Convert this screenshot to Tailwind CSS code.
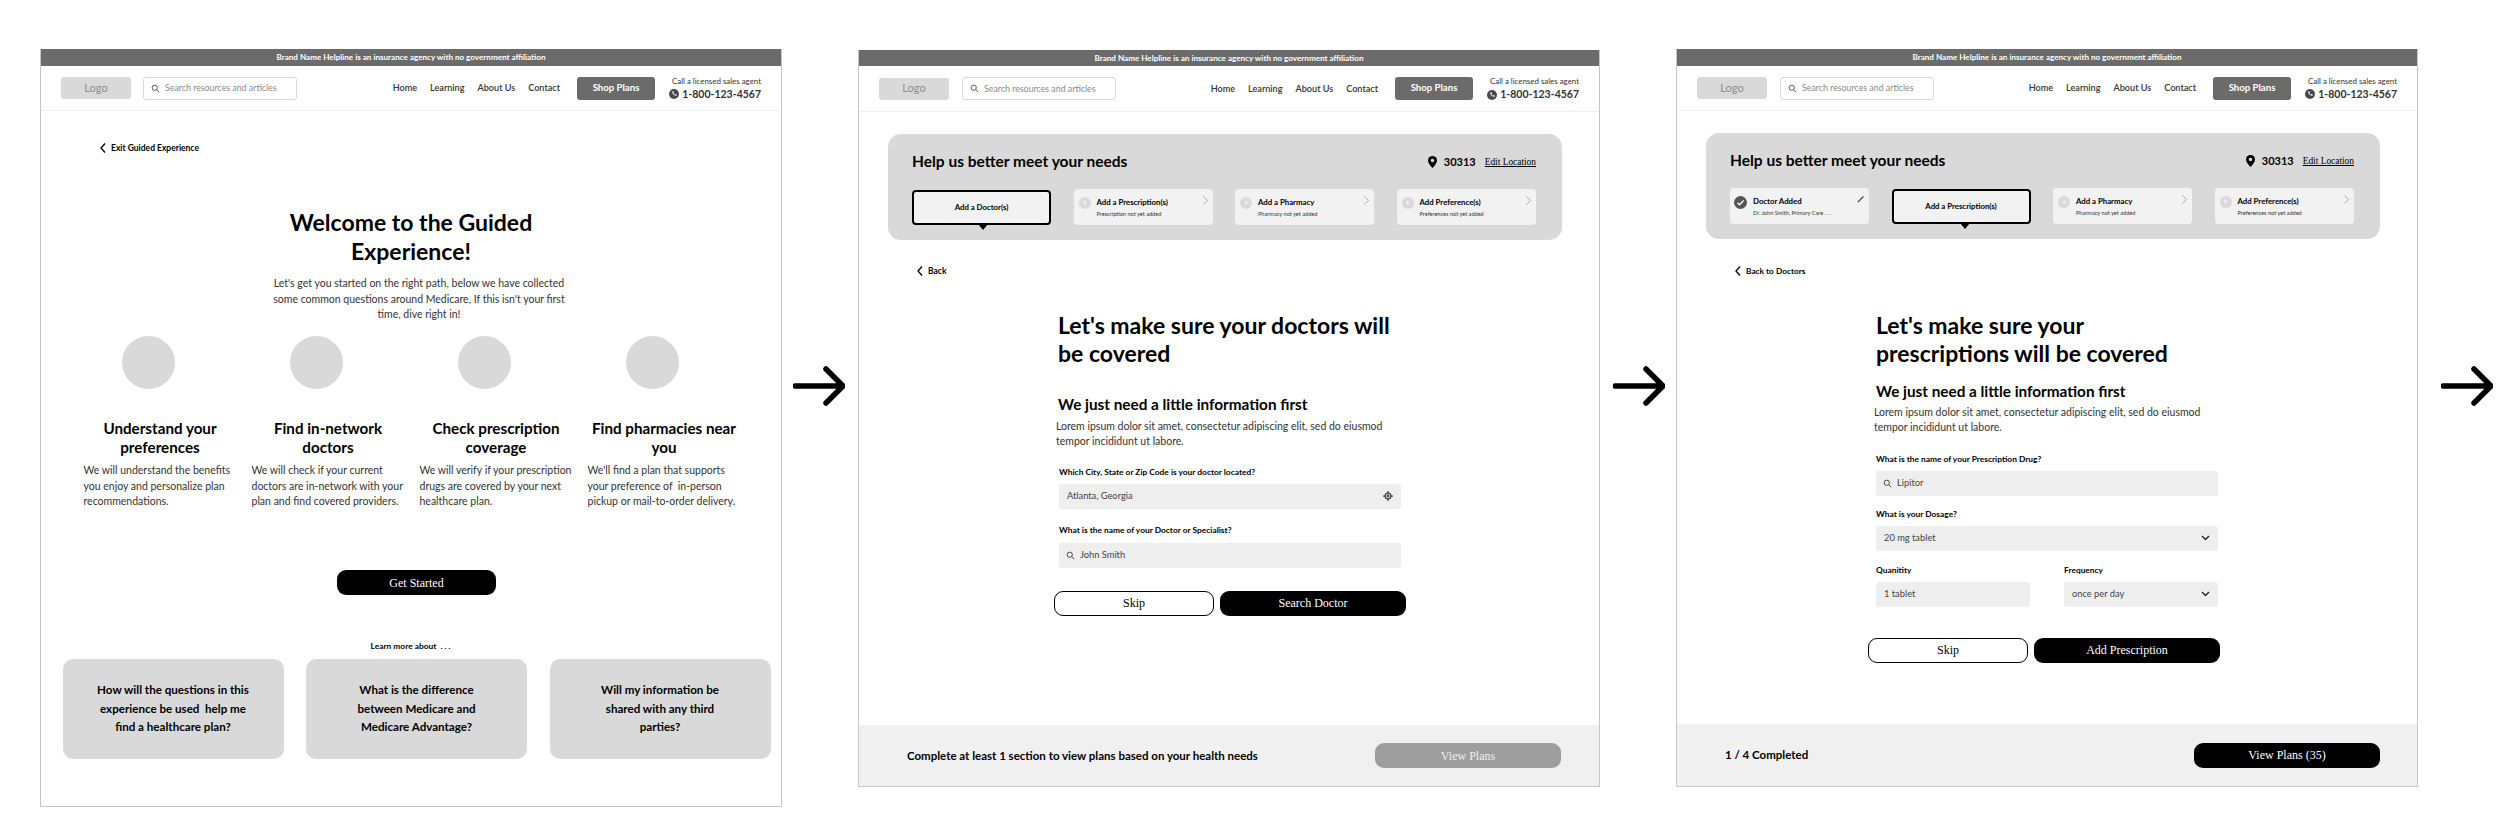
<!DOCTYPE html>
<html lang="en">

<head>
  <meta charset="UTF-8">
  <meta name="viewport" content="width=device-width, initial-scale=1.0">
  <title>Guided Experience Wireframes</title>
  <script src="https://cdn.jsdelivr.net/npm/@tailwindcss/browser@4"></script>
</head>

<body class="bg-white h-[824px] w-[2500px] overflow-hidden font-['Lato',sans-serif] text-black">
  <div class="flex items-start pl-[40px]">

    <!-- Screen 1: welcome -->
    <section class="w-[742px] h-[758px] mt-[49px] shrink-0 flex flex-col border-x border-b border-[#c6c6c6]">
      <div class="h-[17px] shrink-0 bg-[#6b6b6b] text-white text-[8.1px] font-bold flex items-center justify-center">Brand Name Helpline is an insurance agency with no government affiliation</div>
      <header class="h-[45px] shrink-0 flex items-center pl-[20px] pr-[20px] border-b border-[#f0f0f0]">
        <div class="w-[70px] h-[22px] bg-[#d9d9d9] rounded-[3px] text-[#8c8c8c] text-[11px] flex items-center justify-center">Logo</div>
        <div class="w-[154px] h-[23px] ml-[12px] border border-[#d9d9d9] rounded-[3px] flex items-center pl-[7px] gap-[5px] text-[#8a8a8a] text-[8.8px]">
          <svg class="w-[9px] h-[9px]" viewBox="0 0 24 24" fill="none" stroke="#555" stroke-width="2.6"><circle cx="10" cy="10" r="7"/><path d="M15 15l7 7"/></svg>
          Search resources and articles
        </div>
        <nav class="ml-auto flex gap-[13px] text-[9.1px] font-semibold text-[#333]"><span>Home</span><span>Learning</span><span>About Us</span><span>Contact</span></nav>
        <div class="w-[78px] h-[23px] ml-[17px] bg-[#6b6b6b] rounded-[3px] text-white text-[9.6px] font-bold flex items-center justify-center">Shop Plans</div>
        <div class="w-[92px] ml-[14px] text-right">
          <p class="text-[7.9px] leading-[12px] text-[#333] whitespace-nowrap">Call a licensed sales agent</p>
          <p class="text-[10.5px] leading-[15px] font-bold text-[#333] flex items-center justify-end gap-[3px] whitespace-nowrap">
            <svg class="w-[10px] h-[10px]" viewBox="0 0 24 24"><circle cx="12" cy="12" r="12" fill="#4a4a4a"/><path d="M8 6l2.500-.5 1.500 3-1.500 1.500a9 9 0 0 0 3.500 3.500l1.500-1.500 3 1.500-.5 2.500c-5 1-11-5-10-10z" fill="#fff"/></svg>
            1-800-123-4567
          </p>
        </div>
      </header>
      <a class="ml-[59px] mt-[30px] flex items-center gap-[5px] text-[8.5px] font-bold leading-[14px]">
        <svg class="w-[6px] h-[10px]" viewBox="0 0 6 10" fill="none" stroke="#000" stroke-width="1.3"><path d="M5 .5L1 5l4 4.500"/></svg>
        Exit Guided Experience
      </a>
      <h1 class="mt-[53px] text-center text-[23px] leading-[28.5px] font-bold w-[300px] ml-[220px]">Welcome to the Guided Experience!</h1>
      <p class="mt-[11px] w-[300px] ml-[228px] text-center text-[10.5px] leading-[15.5px] text-[#333]">Let's get you started on the right path, below we have collected some common questions around Medicare, If this isn't your first time, dive right in!</p>
      <div class="mt-[13.5px] ml-[42.5px] grid grid-cols-4 gap-x-[15px] w-[657px]">
        <div>
          <div class="w-[53px] h-[53px] rounded-full bg-[#d9d9d9] ml-[38px]"></div>
          <h3 class="mt-[29.5px] text-center text-[15.2px] leading-[19px] font-bold">Understand your preferences</h3>
          <p class="mt-[6.5px] text-[10.5px] leading-[15.5px] text-[#333]">We will understand the benefits you enjoy and personalize plan recommendations.</p>
        </div>
        <div>
          <div class="w-[53px] h-[53px] rounded-full bg-[#d9d9d9] ml-[38px]"></div>
          <h3 class="mt-[29.5px] text-center text-[15.2px] leading-[19px] font-bold">Find in-network doctors</h3>
          <p class="mt-[6.5px] text-[10.5px] leading-[15.5px] text-[#333]">We will check if your current doctors are in-network with your plan and find covered providers.</p>
        </div>
        <div>
          <div class="w-[53px] h-[53px] rounded-full bg-[#d9d9d9] ml-[38px]"></div>
          <h3 class="mt-[29.5px] text-center text-[15.2px] leading-[19px] font-bold">Check prescription coverage</h3>
          <p class="mt-[6.5px] text-[10.5px] leading-[15.5px] text-[#333]">We will verify if your prescription drugs are covered by your next healthcare plan.</p>
        </div>
        <div>
          <div class="w-[53px] h-[53px] rounded-full bg-[#d9d9d9] ml-[38px]"></div>
          <h3 class="mt-[29.5px] text-center text-[15.2px] leading-[19px] font-bold">Find pharmacies near you</h3>
          <p class="mt-[6.5px] text-[10.5px] leading-[15.5px] text-[#333]">We'll find a plan that supports your preference of &nbsp;in-person pickup or mail-to-order delivery.</p>
        </div>
      </div>
      <button class="mt-[60.5px] ml-[296px] w-[159px] h-[25px] shrink-0 rounded-[9px] bg-black text-white text-[12px] font-['Liberation_Serif',serif]">Get Started</button>
      <p class="mt-[44px] text-center text-[8.4px] leading-[14px] font-bold pr-[1px]">Learn more about &nbsp;. . .</p>
      <div class="mt-[6px] ml-[21.5px] flex gap-[22.5px]">
        <div class="w-[221px] h-[100px] rounded-[10px] bg-[#d9d9d9] flex items-center justify-center text-center text-[11.6px] leading-[18.5px] font-bold">How will the questions in this<br>experience be used &nbsp;help me<br>find a healthcare plan?</div>
        <div class="w-[221px] h-[100px] rounded-[10px] bg-[#d9d9d9] flex items-center justify-center text-center text-[11.6px] leading-[18.5px] font-bold">What is the difference<br>between Medicare and<br>Medicare Advantage?</div>
        <div class="w-[221px] h-[100px] rounded-[10px] bg-[#d9d9d9] flex items-center justify-center text-center text-[11.6px] leading-[18.5px] font-bold">Will my information be<br>shared with any third<br>parties?</div>
      </div>
    </section>

    <svg class="w-[52px] h-[40px] mt-[366px] ml-[11px] mr-[13px] shrink-0" viewBox="0 0 52 40" fill="none" stroke="#000" stroke-width="5.5" stroke-linecap="round" stroke-linejoin="round"><path d="M2 20h47M33 3l17 17-17 17"/></svg>

    <!-- Screen 2: doctors -->
    <section class="w-[742px] h-[737px] mt-[50px] shrink-0 flex flex-col border-x border-b border-[#c6c6c6]">
      <div class="h-[16px] shrink-0 bg-[#6b6b6b] text-white text-[8.1px] font-bold flex items-center justify-center">Brand Name Helpline is an insurance agency with no government affiliation</div>
      <header class="h-[46px] shrink-0 flex items-center pl-[20px] pr-[20px] border-b border-[#f0f0f0]">
        <div class="w-[70px] h-[22px] bg-[#d9d9d9] rounded-[3px] text-[#8c8c8c] text-[11px] flex items-center justify-center">Logo</div>
        <div class="w-[154px] h-[23px] ml-[13px] border border-[#d9d9d9] rounded-[3px] flex items-center pl-[7px] gap-[5px] text-[#8a8a8a] text-[8.8px]">
          <svg class="w-[9px] h-[9px]" viewBox="0 0 24 24" fill="none" stroke="#555" stroke-width="2.6"><circle cx="10" cy="10" r="7"/><path d="M15 15l7 7"/></svg>
          Search resources and articles
        </div>
        <nav class="ml-auto flex gap-[13px] text-[9.1px] font-semibold text-[#333]"><span>Home</span><span>Learning</span><span>About Us</span><span>Contact</span></nav>
        <div class="w-[78px] h-[23px] ml-[17px] bg-[#6b6b6b] rounded-[3px] text-white text-[9.6px] font-bold flex items-center justify-center">Shop Plans</div>
        <div class="w-[92px] ml-[14px] text-right">
          <p class="text-[7.9px] leading-[12px] text-[#333] whitespace-nowrap">Call a licensed sales agent</p>
          <p class="text-[10.5px] leading-[15px] font-bold text-[#333] flex items-center justify-end gap-[3px] whitespace-nowrap">
            <svg class="w-[10px] h-[10px]" viewBox="0 0 24 24"><circle cx="12" cy="12" r="12" fill="#4a4a4a"/><path d="M8 6l2.500-.5 1.500 3-1.500 1.500a9 9 0 0 0 3.500 3.500l1.500-1.500 3 1.500-.5 2.500c-5 1-11-5-10-10z" fill="#fff"/></svg>
            1-800-123-4567
          </p>
        </div>
      </header>
      <div class="mt-[22px] ml-[29px] w-[674px] h-[106px] shrink-0 rounded-[13px] bg-[#d9d9d9] pl-[24px] pr-[26px] pt-[17px]">
        <div class="flex items-center h-[22px]">
          <h2 class="text-[15.5px] font-bold">Help us better meet your needs</h2>
          <svg class="ml-auto w-[9px] h-[12px]" viewBox="0 0 18 24"><path d="M9 0a9 9 0 0 0-9 9c0 6 9 15 9 15s9-9 9-15a9 9 0 0 0-9-9z" fill="#000"/><circle cx="9" cy="9" r="3.5" fill="#d9d9d9"/></svg>
          <span class="ml-[7px] text-[11px] font-bold">30313</span>
          <span class="ml-[9px] text-[9.4px] underline font-['Liberation_Serif',serif]">Edit Location</span>
        </div>
        <div class="mt-[16px] flex gap-[22.5px]">
          <div class="relative w-[139px] h-[35px] mt-[1px] rounded-[4px] border-2 border-black bg-[#f2f2f2] flex items-center justify-center text-[7.8px] font-bold">
            Add a Doctor(s)
            <span class="absolute left-[64px] top-[32px] w-0 h-0 border-x-[5px] border-x-transparent border-t-[6px] border-t-black"></span>
          </div>
          <div class="w-[139px] h-[36px] rounded-[4px] bg-[#f2f2f2] flex pl-[5px] pr-[5px] pt-[7px]">
            <span class="w-[12px] h-[12px] mt-[1px] rounded-full bg-[#d9d9d9] text-white text-[9px] leading-[12px] text-center shrink-0">+</span>
            <div class="ml-[6px] grow"><p class="text-[7.8px] leading-[12px] font-bold">Add a Prescription(s)</p><p class="text-[5.6px] leading-[11px] text-[#333]">Prescription not yet added</p></div>
            <svg class="w-[5px] h-[9px]" viewBox="0 0 5 9" fill="none" stroke="#888" stroke-width=".7"><path d="M.5.5l4 4-4 4"/></svg>
          </div>
          <div class="w-[139px] h-[36px] rounded-[4px] bg-[#f2f2f2] flex pl-[5px] pr-[5px] pt-[7px]">
            <span class="w-[12px] h-[12px] mt-[1px] rounded-full bg-[#d9d9d9] text-white text-[9px] leading-[12px] text-center shrink-0">+</span>
            <div class="ml-[6px] grow"><p class="text-[7.8px] leading-[12px] font-bold">Add a Pharmacy</p><p class="text-[5.6px] leading-[11px] text-[#333]">Pharmacy not yet added</p></div>
            <svg class="w-[5px] h-[9px]" viewBox="0 0 5 9" fill="none" stroke="#888" stroke-width=".7"><path d="M.5.5l4 4-4 4"/></svg>
          </div>
          <div class="w-[139px] h-[36px] rounded-[4px] bg-[#f2f2f2] flex pl-[5px] pr-[5px] pt-[7px]">
            <span class="w-[12px] h-[12px] mt-[1px] rounded-full bg-[#d9d9d9] text-white text-[9px] leading-[12px] text-center shrink-0">+</span>
            <div class="ml-[6px] grow"><p class="text-[7.8px] leading-[12px] font-bold">Add Preference(s)</p><p class="text-[5.6px] leading-[11px] text-[#333]">Preferences not yet added</p></div>
            <svg class="w-[5px] h-[9px]" viewBox="0 0 5 9" fill="none" stroke="#888" stroke-width=".7"><path d="M.5.5l4 4-4 4"/></svg>
          </div>
        </div>
      </div>
      <a class="ml-[58px] mt-[24px] flex items-center gap-[5px] text-[8.5px] font-bold leading-[14px]">
        <svg class="w-[6px] h-[10px]" viewBox="0 0 6 10" fill="none" stroke="#000" stroke-width="1.3"><path d="M5 .5L1 5l4 4.500"/></svg>
        Back
      </a>
      <div class="ml-[200px] w-[342px] mt-[32.75px]">
        <h1 class="text-[23px] leading-[28.5px] font-bold -ml-[1px]">Let's make sure your doctors will be covered</h1>
        <h2 class="mt-[25px] -ml-[1px] text-[15.3px] leading-[22px] font-bold">We just need a little information first</h2>
        <p class="mt-[4px] -ml-[3px] w-[344px] text-[10.5px] leading-[15.5px] text-[#333]">Lorem ipsum dolor sit amet, consectetur adipiscing elit, sed do eiusmod tempor incididunt ut labore.</p>
        <label class="block mt-[16px] text-[8.4px] leading-[12px] font-bold">Which City, State or Zip Code is your doctor located?</label>
        <div class="mt-[6px] h-[25px] rounded-[3px] bg-[#eeeeee] flex items-center pl-[8px] pr-[8px] text-[9.3px] text-[#444]">
          Atlanta, Georgia
          <svg class="ml-auto w-[10px] h-[10px]" viewBox="0 0 24 24" fill="none" stroke="#444" stroke-width="3"><circle cx="12" cy="12" r="7"/><path d="M12 0v5M12 19v5M0 12h5M19 12h5"/><circle cx="12" cy="12" r="2" fill="#444"/></svg>
        </div>
        <label class="block mt-[15.5px] text-[8.4px] leading-[12px] font-bold">What is the name of your Doctor or Specialist?</label>
        <div class="mt-[6.5px] h-[25px] rounded-[3px] bg-[#eeeeee] flex items-center pl-[7px] gap-[5px] text-[9.3px] text-[#444]">
          <svg class="w-[9px] h-[9px]" viewBox="0 0 24 24" fill="none" stroke="#444" stroke-width="2.6"><circle cx="10" cy="10" r="7"/><path d="M15 15l7 7"/></svg>
          John Smith
        </div>
        <div class="mt-[23px] -ml-[5px] flex gap-[6px] w-[352px]">
          <button class="w-[160px] h-[25px] shrink-0 rounded-[9px] border border-black bg-white text-[12px] font-['Liberation_Serif',serif]">Skip</button>
          <button class="w-[186px] h-[25px] shrink-0 rounded-[9px] bg-black text-white text-[12px] font-['Liberation_Serif',serif]">Search Doctor</button>
        </div>
      </div>
      <footer class="mt-auto h-[61px] shrink-0 bg-[#f0f0f0] flex items-center pl-[48px] pr-[38px]">
        <p class="text-[11.5px] font-bold">Complete at least 1 section to view plans based on your health needs</p>
        <button class="ml-auto w-[186px] h-[25px] rounded-[9px] bg-[#9e9e9e] text-[#eeeeee] text-[12px] font-['Liberation_Serif',serif]">View Plans</button>
      </footer>
    </section>

    <svg class="w-[52px] h-[40px] mt-[366px] ml-[13px] mr-[11px] shrink-0" viewBox="0 0 52 40" fill="none" stroke="#000" stroke-width="5.5" stroke-linecap="round" stroke-linejoin="round"><path d="M2 20h47M33 3l17 17-17 17"/></svg>

    <!-- Screen 3: prescriptions -->
    <section class="w-[742px] h-[738px] mt-[49px] shrink-0 flex flex-col border-x border-b border-[#c6c6c6]">
      <div class="h-[17px] shrink-0 bg-[#6b6b6b] text-white text-[8.1px] font-bold flex items-center justify-center">Brand Name Helpline is an insurance agency with no government affiliation</div>
      <header class="h-[45px] shrink-0 flex items-center pl-[20px] pr-[20px] border-b border-[#f0f0f0]">
        <div class="w-[70px] h-[22px] bg-[#d9d9d9] rounded-[3px] text-[#8c8c8c] text-[11px] flex items-center justify-center">Logo</div>
        <div class="w-[154px] h-[23px] ml-[13px] border border-[#d9d9d9] rounded-[3px] flex items-center pl-[7px] gap-[5px] text-[#8a8a8a] text-[8.8px]">
          <svg class="w-[9px] h-[9px]" viewBox="0 0 24 24" fill="none" stroke="#555" stroke-width="2.6"><circle cx="10" cy="10" r="7"/><path d="M15 15l7 7"/></svg>
          Search resources and articles
        </div>
        <nav class="ml-auto flex gap-[13px] text-[9.1px] font-semibold text-[#333]"><span>Home</span><span>Learning</span><span>About Us</span><span>Contact</span></nav>
        <div class="w-[78px] h-[23px] ml-[17px] bg-[#6b6b6b] rounded-[3px] text-white text-[9.6px] font-bold flex items-center justify-center">Shop Plans</div>
        <div class="w-[92px] ml-[14px] text-right">
          <p class="text-[7.9px] leading-[12px] text-[#333] whitespace-nowrap">Call a licensed sales agent</p>
          <p class="text-[10.5px] leading-[15px] font-bold text-[#333] flex items-center justify-end gap-[3px] whitespace-nowrap">
            <svg class="w-[10px] h-[10px]" viewBox="0 0 24 24"><circle cx="12" cy="12" r="12" fill="#4a4a4a"/><path d="M8 6l2.500-.5 1.500 3-1.500 1.500a9 9 0 0 0 3.500 3.500l1.500-1.500 3 1.500-.5 2.500c-5 1-11-5-10-10z" fill="#fff"/></svg>
            1-800-123-4567
          </p>
        </div>
      </header>
      <div class="mt-[22px] ml-[29px] w-[674px] h-[106px] shrink-0 rounded-[13px] bg-[#d9d9d9] pl-[24px] pr-[26px] pt-[17px]">
        <div class="flex items-center h-[22px]">
          <h2 class="text-[15.5px] font-bold">Help us better meet your needs</h2>
          <svg class="ml-auto w-[9px] h-[12px]" viewBox="0 0 18 24"><path d="M9 0a9 9 0 0 0-9 9c0 6 9 15 9 15s9-9 9-15a9 9 0 0 0-9-9z" fill="#000"/><circle cx="9" cy="9" r="3.5" fill="#d9d9d9"/></svg>
          <span class="ml-[7px] text-[11px] font-bold">30313</span>
          <span class="ml-[9px] text-[9.4px] underline font-['Liberation_Serif',serif]">Edit Location</span>
        </div>
        <div class="mt-[16px] flex gap-[22.5px]">
          <div class="w-[139px] h-[36px] rounded-[4px] bg-[#f2f2f2] flex pl-[4px] pr-[5px] pt-[7px]">
            <svg class="w-[13px] h-[13px] mt-[1px] shrink-0" viewBox="0 0 24 24"><circle cx="12" cy="12" r="12" fill="#555"/><path d="M6.5 12.5l3.800 3.800 7.500-8" fill="none" stroke="#fff" stroke-width="2.5"/></svg>
            <div class="ml-[6px] grow"><p class="text-[7.8px] leading-[12px] font-bold">Doctor Added</p><p class="text-[5.6px] leading-[11px] text-[#333]">Dr. John Smith, Primary Care . . .</p></div>
            <svg class="w-[7px] h-[7px] mt-[1px]" viewBox="0 0 7 7" fill="none" stroke="#444" stroke-width="1.2"><path d="M6.5.5L.8 6.200"/></svg>
          </div>
          <div class="relative w-[139px] h-[35px] mt-[1px] rounded-[4px] border-2 border-black bg-[#f2f2f2] flex items-center justify-center text-[7.8px] font-bold">
            Add a Prescription(s)
            <span class="absolute left-[66px] top-[32px] w-0 h-0 border-x-[5px] border-x-transparent border-t-[6px] border-t-black"></span>
          </div>
          <div class="w-[139px] h-[36px] rounded-[4px] bg-[#f2f2f2] flex pl-[5px] pr-[5px] pt-[7px]">
            <span class="w-[12px] h-[12px] mt-[1px] rounded-full bg-[#d9d9d9] text-white text-[9px] leading-[12px] text-center shrink-0">+</span>
            <div class="ml-[6px] grow"><p class="text-[7.8px] leading-[12px] font-bold">Add a Pharmacy</p><p class="text-[5.6px] leading-[11px] text-[#333]">Pharmacy not yet added</p></div>
            <svg class="w-[5px] h-[9px]" viewBox="0 0 5 9" fill="none" stroke="#888" stroke-width=".7"><path d="M.5.5l4 4-4 4"/></svg>
          </div>
          <div class="w-[139px] h-[36px] rounded-[4px] bg-[#f2f2f2] flex pl-[5px] pr-[5px] pt-[7px]">
            <span class="w-[12px] h-[12px] mt-[1px] rounded-full bg-[#d9d9d9] text-white text-[9px] leading-[12px] text-center shrink-0">+</span>
            <div class="ml-[6px] grow"><p class="text-[7.8px] leading-[12px] font-bold">Add Preference(s)</p><p class="text-[5.6px] leading-[11px] text-[#333]">Preferences not yet added</p></div>
            <svg class="w-[5px] h-[9px]" viewBox="0 0 5 9" fill="none" stroke="#888" stroke-width=".7"><path d="M.5.5l4 4-4 4"/></svg>
          </div>
        </div>
      </div>
      <a class="ml-[58px] mt-[25px] flex items-center gap-[5px] text-[8.3px] font-bold leading-[14px]">
        <svg class="w-[6px] h-[10px]" viewBox="0 0 6 10" fill="none" stroke="#000" stroke-width="1.3"><path d="M5 .5L1 5l4 4.500"/></svg>
        Back to Doctors
      </a>
      <div class="ml-[199px] w-[342px] mt-[32.75px]">
        <h1 class="text-[23px] leading-[28.5px] font-bold w-[320px]">Let's make sure your prescriptions will be covered</h1>
        <h2 class="mt-[12px] text-[15.3px] leading-[22px] font-bold">We just need a little information first</h2>
        <p class="mt-[3px] -ml-[2px] w-[344px] text-[10.5px] leading-[15.5px] text-[#333]">Lorem ipsum dolor sit amet, consectetur adipiscing elit, sed do eiusmod tempor incididunt ut labore.</p>
        <label class="block mt-[17px] text-[8.4px] leading-[12px] font-bold">What is the name of your Prescription Drug?</label>
        <div class="mt-[6px] h-[25px] rounded-[3px] bg-[#eeeeee] flex items-center pl-[7px] gap-[5px] text-[9.3px] text-[#444]">
          <svg class="w-[9px] h-[9px]" viewBox="0 0 24 24" fill="none" stroke="#444" stroke-width="2.6"><circle cx="10" cy="10" r="7"/><path d="M15 15l7 7"/></svg>
          Lipitor
        </div>
        <label class="block mt-[12px] text-[8.4px] leading-[12px] font-bold">What is your Dosage?</label>
        <div class="mt-[6px] h-[25px] rounded-[3px] bg-[#eeeeee] flex items-center pl-[8px] pr-[8px] text-[9.3px] text-[#444]">
          20 mg tablet
          <svg class="ml-auto w-[9px] h-[6px]" viewBox="0 0 9 6" fill="none" stroke="#222" stroke-width="1.4"><path d="M1 1l3.500 3.500L8 1"/></svg>
        </div>
        <div class="mt-[13px] flex justify-between">
          <div class="w-[154px]">
            <label class="block text-[8.4px] leading-[12px] font-bold">Quanitity</label>
            <div class="mt-[6px] h-[25px] rounded-[3px] bg-[#eeeeee] flex items-center pl-[8px] text-[9.3px] text-[#444]">1 tablet</div>
          </div>
          <div class="w-[154px]">
            <label class="block text-[8.4px] leading-[12px] font-bold">Frequency</label>
            <div class="mt-[6px] h-[25px] rounded-[3px] bg-[#eeeeee] flex items-center pl-[8px] pr-[8px] text-[9.3px] text-[#444]">
              once per day
              <svg class="ml-auto w-[9px] h-[6px]" viewBox="0 0 9 6" fill="none" stroke="#222" stroke-width="1.4"><path d="M1 1l3.500 3.500L8 1"/></svg>
            </div>
          </div>
        </div>
        <div class="mt-[31px] -ml-[8px] flex gap-[6px] w-[352px]">
          <button class="w-[160px] h-[25px] shrink-0 rounded-[9px] border border-black bg-white text-[12px] font-['Liberation_Serif',serif]">Skip</button>
          <button class="w-[186px] h-[25px] shrink-0 rounded-[9px] bg-black text-white text-[12px] font-['Liberation_Serif',serif]">Add Prescription</button>
        </div>
      </div>
      <footer class="mt-auto h-[62px] shrink-0 bg-[#f0f0f0] flex items-center pl-[48px] pr-[37px]">
        <p class="text-[11.5px] font-bold">1 / 4 Completed</p>
        <button class="ml-auto w-[186px] h-[25px] rounded-[9px] bg-black text-white text-[12px] font-['Liberation_Serif',serif]">View Plans (35)</button>
      </footer>
    </section>

    <svg class="w-[52px] h-[40px] mt-[366px] ml-[23px] shrink-0" viewBox="0 0 52 40" fill="none" stroke="#000" stroke-width="5.5" stroke-linecap="round" stroke-linejoin="round"><path d="M2 20h47M33 3l17 17-17 17"/></svg>
  </div>
</body>

</html>
